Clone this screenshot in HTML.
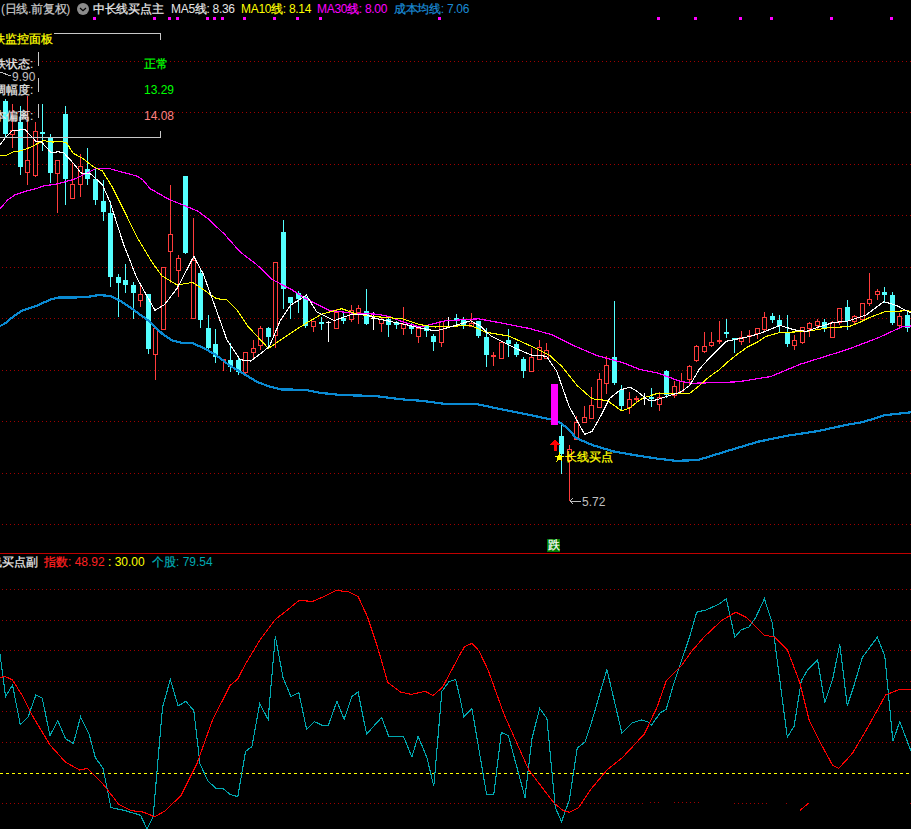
<!DOCTYPE html>
<html><head><meta charset="utf-8">
<style>
html,body{margin:0;padding:0;background:#000;width:911px;height:829px;overflow:hidden}
#c{position:relative;width:911px;height:829px}
svg{position:absolute;left:0;top:0}
.k{-webkit-text-stroke:0.25px currentColor}
.t{position:absolute;font-family:"Liberation Sans",sans-serif;font-size:12px;line-height:14px;white-space:nowrap;color:#fff}
</style></head><body><div id="c">
<svg width="911" height="829" viewBox="0 0 911 829" shape-rendering="crispEdges">
<rect width="911" height="829" fill="#000"/>
<line x1="0" y1="61.5" x2="911" y2="61.5" stroke="#a00000" stroke-dasharray="1 3" stroke-dashoffset="-2"/>
<line x1="0" y1="112.5" x2="911" y2="112.5" stroke="#a00000" stroke-dasharray="1 3" stroke-dashoffset="-2"/>
<line x1="0" y1="164.5" x2="911" y2="164.5" stroke="#a00000" stroke-dasharray="1 3" stroke-dashoffset="-2"/>
<line x1="0" y1="215.5" x2="911" y2="215.5" stroke="#a00000" stroke-dasharray="1 3" stroke-dashoffset="-2"/>
<line x1="0" y1="267.5" x2="911" y2="267.5" stroke="#a00000" stroke-dasharray="1 3" stroke-dashoffset="-2"/>
<line x1="0" y1="318.5" x2="911" y2="318.5" stroke="#a00000" stroke-dasharray="1 3" stroke-dashoffset="-2"/>
<line x1="0" y1="370.5" x2="911" y2="370.5" stroke="#a00000" stroke-dasharray="1 3" stroke-dashoffset="-2"/>
<line x1="0" y1="421.5" x2="911" y2="421.5" stroke="#a00000" stroke-dasharray="1 3" stroke-dashoffset="-2"/>
<line x1="0" y1="473.5" x2="911" y2="473.5" stroke="#a00000" stroke-dasharray="1 3" stroke-dashoffset="-2"/>
<line x1="0" y1="524.5" x2="911" y2="524.5" stroke="#a00000" stroke-dasharray="1 3" stroke-dashoffset="-2"/>
<line x1="0" y1="589.5" x2="911" y2="589.5" stroke="#a00000" stroke-dasharray="1 3" stroke-dashoffset="-2"/>
<line x1="0" y1="620.5" x2="911" y2="620.5" stroke="#a00000" stroke-dasharray="1 3" stroke-dashoffset="-2"/>
<line x1="0" y1="650.5" x2="911" y2="650.5" stroke="#a00000" stroke-dasharray="1 3" stroke-dashoffset="-2"/>
<line x1="0" y1="681.5" x2="911" y2="681.5" stroke="#a00000" stroke-dasharray="1 3" stroke-dashoffset="-2"/>
<line x1="0" y1="711.5" x2="911" y2="711.5" stroke="#a00000" stroke-dasharray="1 3" stroke-dashoffset="-2"/>
<line x1="0" y1="742.5" x2="911" y2="742.5" stroke="#a00000" stroke-dasharray="1 3" stroke-dashoffset="-2"/>
<line x1="0" y1="803.5" x2="644" y2="803.5" stroke="#a00000" stroke-dasharray="1 3" stroke-dashoffset="-2"/>
<line x1="647" y1="802.5" x2="661" y2="802.5" stroke="#a00000" stroke-dasharray="1 3" stroke-dashoffset="-3"/>
<line x1="671" y1="802.5" x2="699" y2="802.5" stroke="#a00000" stroke-dasharray="1 3" stroke-dashoffset="-3"/>
<line x1="732" y1="803.5" x2="770" y2="803.5" stroke="#a00000" stroke-dasharray="1 3" stroke-dashoffset="-2"/>
<line x1="786" y1="803.5" x2="787" y2="803.5" stroke="#a00000" stroke-dasharray="1 3" stroke-dashoffset="0"/>
<line x1="909" y1="803.5" x2="911" y2="803.5" stroke="#a00000" stroke-dasharray="1 3" stroke-dashoffset="-1"/>
<line x1="0" y1="773.5" x2="911" y2="773.5" stroke="#ffff00" stroke-dasharray="3 3"/>
<line x1="0" y1="553.5" x2="911" y2="553.5" stroke="#c00000"/>
<line x1="5.5" y1="99" x2="5.5" y2="137" stroke="#54ffff"/>
<rect x="3" y="101" width="5" height="33" fill="#54ffff"/>
<line x1="12.5" y1="104" x2="12.5" y2="148" stroke="#ff3c3c"/>
<rect x="10.5" y="130.5" width="4" height="4" fill="#000" stroke="#ff3c3c"/>
<line x1="20.5" y1="106" x2="20.5" y2="175" stroke="#54ffff"/>
<rect x="18" y="122" width="5" height="45" fill="#54ffff"/>
<line x1="27.5" y1="96" x2="27.5" y2="185" stroke="#ff3c3c"/>
<rect x="25.5" y="160.5" width="4" height="12" fill="#000" stroke="#ff3c3c"/>
<line x1="35.5" y1="122" x2="35.5" y2="177" stroke="#ff3c3c"/>
<rect x="33.5" y="131.5" width="4" height="44" fill="#000" stroke="#ff3c3c"/>
<line x1="42.5" y1="104" x2="42.5" y2="151" stroke="#54ffff"/>
<rect x="40" y="132" width="5" height="2" fill="#54ffff"/>
<line x1="50.5" y1="134" x2="50.5" y2="183" stroke="#54ffff"/>
<rect x="48" y="137" width="5" height="36" fill="#54ffff"/>
<line x1="57.5" y1="160" x2="57.5" y2="213" stroke="#ff3c3c"/>
<rect x="55.5" y="160.5" width="4" height="13" fill="#000" stroke="#ff3c3c"/>
<line x1="65.5" y1="106" x2="65.5" y2="205" stroke="#54ffff"/>
<rect x="63" y="114" width="5" height="65" fill="#54ffff"/>
<line x1="72.5" y1="163" x2="72.5" y2="199" stroke="#ff3c3c"/>
<rect x="70.5" y="184.5" width="4" height="14" fill="#000" stroke="#ff3c3c"/>
<line x1="80.5" y1="154" x2="80.5" y2="197" stroke="#ff3c3c"/>
<rect x="78.5" y="166.5" width="4" height="18" fill="#000" stroke="#ff3c3c"/>
<line x1="87.5" y1="148" x2="87.5" y2="185" stroke="#54ffff"/>
<rect x="85" y="169" width="5" height="10" fill="#54ffff"/>
<line x1="95.5" y1="169" x2="95.5" y2="205" stroke="#54ffff"/>
<rect x="93" y="179" width="5" height="21" fill="#54ffff"/>
<line x1="103.5" y1="180" x2="103.5" y2="221" stroke="#54ffff"/>
<rect x="101" y="201" width="5" height="11" fill="#54ffff"/>
<line x1="110.5" y1="201" x2="110.5" y2="287" stroke="#54ffff"/>
<rect x="108" y="213" width="5" height="64" fill="#54ffff"/>
<line x1="118.5" y1="274" x2="118.5" y2="317" stroke="#54ffff"/>
<rect x="116" y="277" width="5" height="6" fill="#54ffff"/>
<line x1="125.5" y1="264" x2="125.5" y2="293" stroke="#54ffff"/>
<rect x="123" y="280" width="5" height="5" fill="#54ffff"/>
<line x1="133.5" y1="282" x2="133.5" y2="319" stroke="#54ffff"/>
<rect x="131" y="285" width="5" height="8" fill="#54ffff"/>
<line x1="140.5" y1="283" x2="140.5" y2="307" stroke="#ff3c3c"/>
<rect x="138.5" y="294.5" width="4" height="6" fill="#000" stroke="#ff3c3c"/>
<line x1="148.5" y1="294" x2="148.5" y2="354" stroke="#54ffff"/>
<rect x="146" y="294" width="5" height="55" fill="#54ffff"/>
<line x1="155.5" y1="328" x2="155.5" y2="380" stroke="#ff3c3c"/>
<rect x="153.5" y="328.5" width="4" height="26" fill="#000" stroke="#ff3c3c"/>
<line x1="163.5" y1="267" x2="163.5" y2="330" stroke="#ff3c3c"/>
<rect x="161.5" y="267.5" width="4" height="62" fill="#000" stroke="#ff3c3c"/>
<line x1="170.5" y1="185" x2="170.5" y2="283" stroke="#ff3c3c"/>
<rect x="168.5" y="234.5" width="4" height="17" fill="#000" stroke="#ff3c3c"/>
<line x1="178.5" y1="255" x2="178.5" y2="297" stroke="#ff3c3c"/>
<rect x="176.5" y="258.5" width="4" height="12" fill="#000" stroke="#ff3c3c"/>
<line x1="185.5" y1="176" x2="185.5" y2="254" stroke="#54ffff"/>
<rect x="183" y="176" width="5" height="77" fill="#54ffff"/>
<line x1="193.5" y1="218" x2="193.5" y2="319" stroke="#ff3c3c"/>
<rect x="191.5" y="260.5" width="4" height="58" fill="#000" stroke="#ff3c3c"/>
<line x1="200.5" y1="270" x2="200.5" y2="328" stroke="#54ffff"/>
<rect x="198" y="273" width="5" height="47" fill="#54ffff"/>
<line x1="208.5" y1="315" x2="208.5" y2="350" stroke="#54ffff"/>
<rect x="206" y="328" width="5" height="20" fill="#54ffff"/>
<line x1="215.5" y1="329" x2="215.5" y2="363" stroke="#54ffff"/>
<rect x="213" y="344" width="5" height="13" fill="#54ffff"/>
<line x1="223.5" y1="359" x2="223.5" y2="371" stroke="#ff3c3c"/>
<rect x="221" y="359" width="5" height="2" fill="#ff3c3c"/>
<line x1="230.5" y1="343" x2="230.5" y2="372" stroke="#54ffff"/>
<rect x="228" y="360" width="5" height="7" fill="#54ffff"/>
<line x1="238.5" y1="357" x2="238.5" y2="375" stroke="#54ffff"/>
<rect x="236" y="360" width="5" height="12" fill="#54ffff"/>
<line x1="245.5" y1="352" x2="245.5" y2="376" stroke="#ff3c3c"/>
<rect x="243.5" y="352.5" width="4" height="20" fill="#000" stroke="#ff3c3c"/>
<line x1="253.5" y1="340" x2="253.5" y2="358" stroke="#ff3c3c"/>
<rect x="251.5" y="348.5" width="4" height="4" fill="#000" stroke="#ff3c3c"/>
<line x1="260.5" y1="326" x2="260.5" y2="350" stroke="#ff3c3c"/>
<rect x="258.5" y="328.5" width="4" height="17" fill="#000" stroke="#ff3c3c"/>
<line x1="268.5" y1="327" x2="268.5" y2="346" stroke="#54ffff"/>
<rect x="266" y="328" width="5" height="9" fill="#54ffff"/>
<line x1="275.5" y1="262" x2="275.5" y2="348" stroke="#ff3c3c"/>
<rect x="273.5" y="262.5" width="4" height="73" fill="#000" stroke="#ff3c3c"/>
<line x1="283.5" y1="220" x2="283.5" y2="309" stroke="#54ffff"/>
<rect x="281" y="232" width="5" height="57" fill="#54ffff"/>
<line x1="290.5" y1="297" x2="290.5" y2="319" stroke="#54ffff"/>
<rect x="288" y="297" width="5" height="6" fill="#54ffff"/>
<line x1="298.5" y1="291" x2="298.5" y2="313" stroke="#54ffff"/>
<rect x="296" y="293" width="5" height="6" fill="#54ffff"/>
<line x1="305.5" y1="295" x2="305.5" y2="328" stroke="#54ffff"/>
<rect x="303" y="297" width="5" height="29" fill="#54ffff"/>
<line x1="313.5" y1="321" x2="313.5" y2="332" stroke="#ff3c3c"/>
<rect x="311.5" y="321.5" width="4" height="5" fill="#000" stroke="#ff3c3c"/>
<line x1="321.5" y1="317" x2="321.5" y2="330" stroke="#54ffff"/>
<rect x="319" y="322" width="5" height="2" fill="#54ffff"/>
<line x1="328.5" y1="321" x2="328.5" y2="342" stroke="#ffffff"/>
<rect x="326" y="322" width="5" height="1" fill="#ffffff"/>
<line x1="336.5" y1="309" x2="336.5" y2="329" stroke="#ff3c3c"/>
<rect x="334.5" y="312.5" width="4" height="16" fill="#000" stroke="#ff3c3c"/>
<line x1="343.5" y1="312" x2="343.5" y2="324" stroke="#54ffff"/>
<rect x="341" y="318" width="5" height="3" fill="#54ffff"/>
<line x1="351.5" y1="305" x2="351.5" y2="322" stroke="#ff3c3c"/>
<rect x="349.5" y="310.5" width="4" height="9" fill="#000" stroke="#ff3c3c"/>
<line x1="358.5" y1="305" x2="358.5" y2="324" stroke="#ff3c3c"/>
<rect x="356.5" y="308.5" width="4" height="4" fill="#000" stroke="#ff3c3c"/>
<line x1="366.5" y1="289" x2="366.5" y2="325" stroke="#54ffff"/>
<rect x="364" y="311" width="5" height="13" fill="#54ffff"/>
<line x1="373.5" y1="312" x2="373.5" y2="330" stroke="#ffffff"/>
<rect x="371" y="318" width="5" height="1" fill="#ffffff"/>
<line x1="381.5" y1="317" x2="381.5" y2="332" stroke="#ff3c3c"/>
<rect x="379.5" y="319.5" width="4" height="4" fill="#000" stroke="#ff3c3c"/>
<line x1="388.5" y1="318" x2="388.5" y2="337" stroke="#54ffff"/>
<rect x="386" y="319" width="5" height="6" fill="#54ffff"/>
<line x1="396.5" y1="321" x2="396.5" y2="329" stroke="#54ffff"/>
<rect x="394" y="322" width="5" height="3" fill="#54ffff"/>
<line x1="403.5" y1="307" x2="403.5" y2="335" stroke="#ff3c3c"/>
<rect x="401.5" y="324.5" width="4" height="4" fill="#000" stroke="#ff3c3c"/>
<line x1="411.5" y1="323" x2="411.5" y2="334" stroke="#54ffff"/>
<rect x="409" y="326" width="5" height="3" fill="#54ffff"/>
<line x1="418.5" y1="328" x2="418.5" y2="343" stroke="#ff3c3c"/>
<rect x="416.5" y="328.5" width="4" height="8" fill="#000" stroke="#ff3c3c"/>
<line x1="426.5" y1="325" x2="426.5" y2="337" stroke="#54ffff"/>
<rect x="424" y="326" width="5" height="5" fill="#54ffff"/>
<line x1="433.5" y1="334" x2="433.5" y2="351" stroke="#54ffff"/>
<rect x="431" y="336" width="5" height="6" fill="#54ffff"/>
<line x1="441.5" y1="321" x2="441.5" y2="347" stroke="#ff3c3c"/>
<rect x="439.5" y="321.5" width="4" height="21" fill="#000" stroke="#ff3c3c"/>
<line x1="448.5" y1="317" x2="448.5" y2="326" stroke="#ffffff"/>
<rect x="446" y="320" width="5" height="1" fill="#ffffff"/>
<line x1="456.5" y1="314" x2="456.5" y2="324" stroke="#54ffff"/>
<rect x="454" y="318" width="5" height="3" fill="#54ffff"/>
<line x1="463.5" y1="317" x2="463.5" y2="329" stroke="#54ffff"/>
<rect x="461" y="319" width="5" height="6" fill="#54ffff"/>
<line x1="471.5" y1="313" x2="471.5" y2="327" stroke="#ff3c3c"/>
<rect x="469.5" y="323.5" width="4" height="3" fill="#000" stroke="#ff3c3c"/>
<line x1="478.5" y1="321" x2="478.5" y2="338" stroke="#54ffff"/>
<rect x="476" y="321" width="5" height="15" fill="#54ffff"/>
<line x1="486.5" y1="328" x2="486.5" y2="367" stroke="#54ffff"/>
<rect x="484" y="337" width="5" height="18" fill="#54ffff"/>
<line x1="493.5" y1="352" x2="493.5" y2="366" stroke="#ff3c3c"/>
<rect x="491" y="355" width="5" height="2" fill="#ff3c3c"/>
<line x1="501.5" y1="342" x2="501.5" y2="359" stroke="#ff3c3c"/>
<rect x="499.5" y="342.5" width="4" height="16" fill="#000" stroke="#ff3c3c"/>
<line x1="508.5" y1="329" x2="508.5" y2="357" stroke="#54ffff"/>
<rect x="506" y="340" width="5" height="4" fill="#54ffff"/>
<line x1="516.5" y1="342" x2="516.5" y2="357" stroke="#54ffff"/>
<rect x="514" y="344" width="5" height="11" fill="#54ffff"/>
<line x1="523.5" y1="357" x2="523.5" y2="378" stroke="#54ffff"/>
<rect x="521" y="359" width="5" height="12" fill="#54ffff"/>
<line x1="531.5" y1="348" x2="531.5" y2="372" stroke="#ff3c3c"/>
<rect x="529.5" y="357.5" width="4" height="14" fill="#000" stroke="#ff3c3c"/>
<line x1="539.5" y1="340" x2="539.5" y2="360" stroke="#ff3c3c"/>
<rect x="537.5" y="347.5" width="4" height="12" fill="#000" stroke="#ff3c3c"/>
<line x1="546.5" y1="343" x2="546.5" y2="359" stroke="#ff3c3c"/>
<rect x="544.5" y="350.5" width="4" height="8" fill="#000" stroke="#ff3c3c"/>
<line x1="561.5" y1="423" x2="561.5" y2="474" stroke="#54ffff"/>
<rect x="559" y="436" width="5" height="18" fill="#54ffff"/>
<line x1="569.5" y1="445" x2="569.5" y2="501" stroke="#ff3c3c"/>
<rect x="567.5" y="449.5" width="4" height="11" fill="#000" stroke="#ff3c3c"/>
<line x1="576.5" y1="416" x2="576.5" y2="440" stroke="#ff3c3c"/>
<rect x="574.5" y="422.5" width="4" height="17" fill="#000" stroke="#ff3c3c"/>
<line x1="584.5" y1="406" x2="584.5" y2="423" stroke="#ff3c3c"/>
<rect x="582.5" y="417.5" width="4" height="5" fill="#000" stroke="#ff3c3c"/>
<line x1="591.5" y1="387" x2="591.5" y2="419" stroke="#ff3c3c"/>
<rect x="589.5" y="405.5" width="4" height="13" fill="#000" stroke="#ff3c3c"/>
<line x1="599.5" y1="373" x2="599.5" y2="408" stroke="#ff3c3c"/>
<rect x="597.5" y="379.5" width="4" height="28" fill="#000" stroke="#ff3c3c"/>
<line x1="606.5" y1="356" x2="606.5" y2="394" stroke="#ff3c3c"/>
<rect x="604.5" y="365.5" width="4" height="18" fill="#000" stroke="#ff3c3c"/>
<line x1="614.5" y1="301" x2="614.5" y2="385" stroke="#54ffff"/>
<rect x="612" y="357" width="5" height="26" fill="#54ffff"/>
<line x1="621.5" y1="385" x2="621.5" y2="410" stroke="#54ffff"/>
<rect x="619" y="390" width="5" height="16" fill="#54ffff"/>
<line x1="629.5" y1="392" x2="629.5" y2="414" stroke="#ff3c3c"/>
<rect x="627.5" y="399.5" width="4" height="8" fill="#000" stroke="#ff3c3c"/>
<line x1="636.5" y1="396" x2="636.5" y2="403" stroke="#ff3c3c"/>
<rect x="634" y="398" width="5" height="2" fill="#ff3c3c"/>
<line x1="644.5" y1="393" x2="644.5" y2="405" stroke="#ffffff"/>
<rect x="642" y="398" width="5" height="1" fill="#ffffff"/>
<line x1="651.5" y1="388" x2="651.5" y2="407" stroke="#54ffff"/>
<rect x="649" y="397" width="5" height="2" fill="#54ffff"/>
<line x1="659.5" y1="392" x2="659.5" y2="411" stroke="#ff3c3c"/>
<rect x="657.5" y="397.5" width="4" height="7" fill="#000" stroke="#ff3c3c"/>
<line x1="666.5" y1="370" x2="666.5" y2="398" stroke="#54ffff"/>
<rect x="664" y="371" width="5" height="24" fill="#54ffff"/>
<line x1="674.5" y1="381" x2="674.5" y2="398" stroke="#ff3c3c"/>
<rect x="672.5" y="386.5" width="4" height="9" fill="#000" stroke="#ff3c3c"/>
<line x1="681.5" y1="373" x2="681.5" y2="392" stroke="#ff3c3c"/>
<rect x="679.5" y="381.5" width="4" height="10" fill="#000" stroke="#ff3c3c"/>
<line x1="689.5" y1="365" x2="689.5" y2="385" stroke="#ff3c3c"/>
<rect x="687.5" y="366.5" width="4" height="13" fill="#000" stroke="#ff3c3c"/>
<line x1="696.5" y1="345" x2="696.5" y2="362" stroke="#ff3c3c"/>
<rect x="694.5" y="346.5" width="4" height="14" fill="#000" stroke="#ff3c3c"/>
<line x1="704.5" y1="332" x2="704.5" y2="353" stroke="#ff3c3c"/>
<rect x="702.5" y="346.5" width="4" height="5" fill="#000" stroke="#ff3c3c"/>
<line x1="711.5" y1="332" x2="711.5" y2="347" stroke="#ff3c3c"/>
<rect x="709.5" y="342.5" width="4" height="3" fill="#000" stroke="#ff3c3c"/>
<line x1="719.5" y1="321" x2="719.5" y2="344" stroke="#ff3c3c"/>
<rect x="717" y="340" width="5" height="2" fill="#ff3c3c"/>
<line x1="726.5" y1="319" x2="726.5" y2="338" stroke="#54ffff"/>
<rect x="724" y="332" width="5" height="2" fill="#54ffff"/>
<line x1="734.5" y1="338" x2="734.5" y2="353" stroke="#54ffff"/>
<rect x="732" y="338" width="5" height="2" fill="#54ffff"/>
<line x1="741.5" y1="331" x2="741.5" y2="345" stroke="#ff3c3c"/>
<rect x="739.5" y="337.5" width="4" height="4" fill="#000" stroke="#ff3c3c"/>
<line x1="749.5" y1="330" x2="749.5" y2="343" stroke="#ff3c3c"/>
<rect x="747" y="335" width="5" height="2" fill="#ff3c3c"/>
<line x1="757.5" y1="328" x2="757.5" y2="339" stroke="#ff3c3c"/>
<rect x="755.5" y="328.5" width="4" height="5" fill="#000" stroke="#ff3c3c"/>
<line x1="764.5" y1="312" x2="764.5" y2="332" stroke="#ff3c3c"/>
<rect x="762.5" y="317.5" width="4" height="12" fill="#000" stroke="#ff3c3c"/>
<line x1="772.5" y1="313" x2="772.5" y2="323" stroke="#54ffff"/>
<rect x="770" y="316" width="5" height="4" fill="#54ffff"/>
<line x1="779.5" y1="315" x2="779.5" y2="332" stroke="#54ffff"/>
<rect x="777" y="320" width="5" height="6" fill="#54ffff"/>
<line x1="787.5" y1="315" x2="787.5" y2="347" stroke="#54ffff"/>
<rect x="785" y="332" width="5" height="12" fill="#54ffff"/>
<line x1="794.5" y1="335" x2="794.5" y2="350" stroke="#ff3c3c"/>
<rect x="792.5" y="340.5" width="4" height="5" fill="#000" stroke="#ff3c3c"/>
<line x1="802.5" y1="327" x2="802.5" y2="344" stroke="#ff3c3c"/>
<rect x="800.5" y="327.5" width="4" height="15" fill="#000" stroke="#ff3c3c"/>
<line x1="809.5" y1="322" x2="809.5" y2="337" stroke="#ff3c3c"/>
<rect x="807.5" y="323.5" width="4" height="5" fill="#000" stroke="#ff3c3c"/>
<line x1="817.5" y1="319" x2="817.5" y2="329" stroke="#ff3c3c"/>
<rect x="815.5" y="321.5" width="4" height="4" fill="#000" stroke="#ff3c3c"/>
<line x1="824.5" y1="319" x2="824.5" y2="332" stroke="#54ffff"/>
<rect x="822" y="322" width="5" height="6" fill="#54ffff"/>
<line x1="832.5" y1="321" x2="832.5" y2="338" stroke="#ff3c3c"/>
<rect x="830.5" y="322.5" width="4" height="15" fill="#000" stroke="#ff3c3c"/>
<line x1="839.5" y1="308" x2="839.5" y2="325" stroke="#ff3c3c"/>
<rect x="837.5" y="308.5" width="4" height="14" fill="#000" stroke="#ff3c3c"/>
<line x1="847.5" y1="300" x2="847.5" y2="330" stroke="#54ffff"/>
<rect x="845" y="307" width="5" height="14" fill="#54ffff"/>
<line x1="854.5" y1="315" x2="854.5" y2="325" stroke="#ff3c3c"/>
<rect x="852.5" y="316.5" width="4" height="5" fill="#000" stroke="#ff3c3c"/>
<line x1="862.5" y1="303" x2="862.5" y2="321" stroke="#ff3c3c"/>
<rect x="860.5" y="303.5" width="4" height="16" fill="#000" stroke="#ff3c3c"/>
<line x1="869.5" y1="273" x2="869.5" y2="306" stroke="#ff3c3c"/>
<rect x="867.5" y="299.5" width="4" height="4" fill="#000" stroke="#ff3c3c"/>
<line x1="877.5" y1="289" x2="877.5" y2="300" stroke="#ff3c3c"/>
<rect x="875.5" y="291.5" width="4" height="3" fill="#000" stroke="#ff3c3c"/>
<line x1="884.5" y1="287" x2="884.5" y2="303" stroke="#54ffff"/>
<rect x="882" y="292" width="5" height="3" fill="#54ffff"/>
<line x1="892.5" y1="292" x2="892.5" y2="325" stroke="#54ffff"/>
<rect x="890" y="295" width="5" height="28" fill="#54ffff"/>
<line x1="899.5" y1="313" x2="899.5" y2="327" stroke="#ff3c3c"/>
<rect x="897.5" y="316.5" width="4" height="9" fill="#000" stroke="#ff3c3c"/>
<line x1="907.5" y1="311" x2="907.5" y2="332" stroke="#54ffff"/>
<rect x="905" y="315" width="5" height="13" fill="#54ffff"/>
<polyline points="0.0,326.0 5.0,323.5 12.7,317.0 21.5,310.8 30.4,307.8 38.0,305.2 50.7,299.4 58.3,297.6 78.5,297.4 91.2,296.4 98.8,295.0 110.2,296.0 119.0,300.0 134.2,310.3 149.4,321.4 162.1,333.6 172.2,340.4 182.4,343.0 192.5,343.2 202.6,347.5 215.3,354.4 229.2,365.2 232.0,366.9 244.1,374.1 256.2,381.4 268.3,386.2 280.4,389.4 304.5,389.8 321.4,393.0 338.3,394.7 352.8,395.4 374.6,395.9 389.0,397.8 403.5,399.5 420.4,400.7 445.3,403.9 478.3,404.4 496.0,408.2 521.3,413.2 551.7,419.6 559.3,422.0 568.0,428.7 576.1,438.0 592.5,445.1 613.0,451.3 633.6,455.0 657.8,458.7 675.7,460.8 696.5,460.2 705.4,457.8 729.2,450.4 759.0,441.5 788.7,435.5 818.5,431.0 848.2,424.5 863.1,422.1 883.9,415.3 911.0,412.3" fill="none" stroke="#0a8ad2" stroke-width="2.2" stroke-linejoin="round"/>
<rect x="551" y="384" width="7" height="41" fill="#ff00ff"/>
<polyline points="0.0,208.5 7.7,200.0 15.4,194.6 25.1,191.4 36.7,188.5 44.4,185.6 54.0,184.6 65.6,181.7 75.3,178.8 86.1,173.5 96.5,168.2 108.1,168.2 121.6,172.0 136.8,176.0 142.9,179.8 150.0,188.6 168.6,199.2 181.8,204.5 197.7,211.1 208.4,219.1 224.3,234.0 240.2,252.0 256.1,264.0 272.0,279.5 290.6,289.0 306.4,299.0 329.2,310.4 352.0,313.0 377.3,314.2 390.0,316.8 402.6,321.8 420.0,327.0 445.3,320.8 478.3,318.8 496.0,322.0 529.0,328.4 551.7,334.7 572.0,344.9 597.3,355.7 622.6,362.6 640.0,369.5 657.8,373.0 680.0,381.3 692.5,383.2 714.7,382.7 737.9,381.8 753.4,379.4 770.9,376.5 800.6,364.1 824.4,356.7 848.2,349.2 878.0,337.9 901.8,326.9 911.0,326.0" fill="none" stroke="#ff00ff" stroke-width="1.2" />
<polyline points="0.0,155.7 5.8,155.6 13.5,151.8 21.2,150.8 30.9,147.0 43.4,140.6 52.1,142.0 61.8,141.7 66.6,143.0 73.4,153.5 83.0,158.5 92.7,166.3 102.3,171.0 112.0,186.5 123.6,209.7 136.8,236.8 152.0,262.2 162.1,276.0 177.3,285.0 192.5,282.4 203.0,289.4 216.3,298.6 226.9,300.0 237.5,310.6 248.1,326.5 268.4,348.4 288.7,334.5 306.4,323.0 321.6,314.2 341.8,308.7 357.0,314.2 377.3,316.8 402.6,318.8 420.0,324.6 435.2,327.0 470.7,325.4 485.9,332.2 508.7,336.0 534.0,347.4 549.2,355.0 561.8,366.4 577.0,385.4 592.2,398.8 607.4,400.6 621.4,410.7 629.0,408.5 632.9,405.5 638.2,401.1 643.4,397.6 649.6,396.2 657.5,393.2 663.8,393.9 689.7,393.4 699.3,385.6 709.0,377.0 718.6,370.2 728.3,361.5 737.9,353.8 747.6,347.0 757.2,342.2 765.8,336.5 779.7,332.5 805.5,331.6 829.3,327.6 849.2,326.6 859.1,322.6 869.0,317.7 884.9,311.7 908.7,310.7 911.0,312.0" fill="none" stroke="#ffff00" stroke-width="1.1" />
<polyline points="0.0,145.0 5.0,138.0 12.5,130.5 25.0,129.6 35.7,141.0 41.5,142.0 51.2,152.7 57.9,151.8 63.7,152.7 73.4,163.4 81.0,173.0 90.7,174.0 102.3,184.6 110.0,202.0 123.6,244.4 136.8,277.9 155.0,310.3 164.6,304.5 177.3,288.0 193.8,256.3 203.0,273.5 213.7,302.6 226.9,339.8 240.2,359.7 250.8,361.0 261.4,353.0 269.4,346.4 280.0,321.2 290.6,305.3 306.4,295.2 316.5,311.7 334.2,320.6 352.0,314.2 364.6,314.2 377.3,318.8 402.6,323.9 420.0,327.9 435.2,331.0 445.3,328.4 470.7,320.8 480.8,326.4 490.9,336.0 516.3,348.7 531.5,355.0 546.6,356.3 556.8,371.4 569.4,407.0 584.6,434.3 592.0,431.5 600.8,415.8 609.5,398.6 620.3,389.9 629.8,387.2 636.0,390.5 643.9,396.7 649.6,400.6 657.0,399.8 669.7,395.4 680.0,392.4 689.7,385.6 699.3,369.2 709.0,358.6 718.6,349.0 726.3,341.2 734.0,339.8 747.6,336.9 760.0,333.5 779.8,325.4 794.7,329.9 806.6,331.4 818.5,327.0 833.4,322.5 848.2,321.0 866.1,315.0 883.9,301.6 895.8,305.2 911.0,313.0" fill="none" stroke="#ffffff" stroke-width="1.1" />
<polyline points="0.0,654.4 5.6,696.6 12.5,685.0 20.3,724.7 28.1,716.9 35.9,695.0 42.2,698.1 50.0,735.6 57.8,720.6 65.6,738.8 73.4,743.4 80.6,716.9 89.0,734.0 95.3,757.5 103.1,768.4 110.9,807.5 125.0,810.6 140.6,815.3 146.9,829.0 153.1,816.9 162.5,707.5 170.3,679.4 178.1,705.9 185.9,701.3 193.8,710.6 200.0,763.8 207.8,780.9 215.6,788.1 222.5,788.1 230.0,794.4 237.8,796.6 245.6,751.3 251.9,746.6 259.7,703.8 268.1,719.4 275.3,636.3 283.1,677.8 290.9,696.6 298.8,692.5 306.6,729.4 314.4,721.6 322.2,725.3 328.4,725.3 336.9,701.3 344.1,719.4 351.9,696.6 358.1,691.9 366.6,734.0 381.6,717.5 388.8,736.3 403.4,736.3 411.9,756.9 418.1,736.3 426.9,757.5 433.8,786.3 441.9,691.3 448.8,681.9 455.6,679.4 460.0,698.1 463.8,716.9 471.9,708.4 486.6,794.4 493.8,794.4 501.3,732.5 508.4,735.6 525.0,797.5 531.9,738.8 539.7,708.4 546.9,718.4 555.3,807.5 561.6,821.6 569.4,799.7 577.2,748.1 585.0,741.9 591.3,723.1 606.9,669.4 621.9,733.1 631.9,723.1 641.3,720.0 647.5,721.6 651.3,725.3 660.0,713.1 666.3,709.1 674.1,682.5 690.0,635.6 696.6,612.2 706.0,610.0 718.5,604.4 726.3,598.8 734.8,637.2 741.0,630.0 749.1,626.9 756.0,616.9 764.4,598.8 772.3,623.1 787.3,737.2 794.1,726.3 801.3,680.9 807.6,670.0 817.6,660.0 824.8,702.8 832.6,679.4 839.8,644.4 847.3,705.9 854.4,684.1 862.3,657.5 877.3,637.2 884.8,655.9 892.9,741.3 899.8,721.6 911.0,751.3" fill="none" stroke="#00a8b0" stroke-width="1.1" />
<polyline points="0.0,677.8 4.7,676.3 12.5,680.0 21.9,695.0 31.3,713.8 50.0,745.0 65.6,762.2 79.7,770.0 87.5,768.4 103.0,784.0 118.8,804.4 131.3,810.6 143.8,812.2 154.7,816.9 165.6,810.6 181.3,795.0 196.9,763.8 212.5,720.0 230.0,685.6 237.8,678.8 245.6,663.8 259.7,640.3 275.3,619.4 284.7,612.2 298.8,600.6 312.8,601.3 323.8,596.6 336.3,590.3 348.8,591.9 358.1,596.6 367.5,616.9 376.9,645.0 387.8,682.5 400.3,691.9 411.3,694.4 425.3,691.3 433.1,695.6 442.5,687.2 460.0,654.4 464.7,646.6 471.9,643.4 478.8,650.6 488.1,670.0 503.8,713.8 528.8,770.0 553.8,802.8 563.1,810.6 569.4,812.2 578.8,807.5 591.3,788.8 606.9,770.0 622.5,757.5 644.4,734.0 656.9,707.5 666.3,680.9 681.9,665.3 690.4,652.8 704.4,636.6 721.6,620.6 735.7,612.2 746.6,617.5 763.8,635.0 774.8,637.2 787.3,649.7 799.8,682.5 809.1,720.0 821.6,745.0 832.6,765.3 838.8,768.4 852.8,752.8 868.4,726.3 885.6,695.0 899.8,689.4 911.0,689.4" fill="none" stroke="#ff0000" stroke-width="1.1" />
<line x1="799.8" y1="810.6" x2="809.1" y2="802.8" stroke="#ff0000"/>
<rect x="93" y="17" width="3" height="3" fill="#ff00ff"/>
<rect x="153" y="17" width="3" height="3" fill="#ff00ff"/>
<rect x="168" y="17" width="3" height="3" fill="#ff00ff"/>
<rect x="176" y="17" width="3" height="3" fill="#ff00ff"/>
<rect x="206" y="17" width="3" height="3" fill="#ff00ff"/>
<rect x="213" y="17" width="3" height="3" fill="#ff00ff"/>
<rect x="221" y="17" width="3" height="3" fill="#ff00ff"/>
<rect x="243" y="17" width="3" height="3" fill="#ff00ff"/>
<rect x="273" y="17" width="3" height="3" fill="#ff00ff"/>
<rect x="296" y="17" width="3" height="3" fill="#ff00ff"/>
<rect x="319" y="17" width="3" height="3" fill="#ff00ff"/>
<rect x="438" y="17" width="3" height="3" fill="#ff00ff"/>
<rect x="657" y="17" width="3" height="3" fill="#ff00ff"/>
<rect x="694" y="17" width="3" height="3" fill="#ff00ff"/>
<rect x="739" y="17" width="3" height="3" fill="#ff00ff"/>
<rect x="770" y="17" width="3" height="3" fill="#ff00ff"/>
<rect x="830" y="17" width="3" height="3" fill="#ff00ff"/>
<rect x="890" y="17" width="3" height="3" fill="#ff00ff"/>
<polyline points="0,33.5 160.5,33.5 160.5,40" fill="none" stroke="#c8c8c8"/>
<polyline points="0,137.5 160.5,137.5 160.5,131" fill="none" stroke="#c8c8c8"/>
<line x1="38.5" y1="52" x2="38.5" y2="66" stroke="#c8c8c8"/>
<line x1="38.5" y1="78" x2="38.5" y2="92" stroke="#c8c8c8"/>
<line x1="38.5" y1="104" x2="38.5" y2="118" stroke="#c8c8c8"/>
<polygon points="555,439 550,445 553.5,445 553.5,451 556.5,451 556.5,445 560,445" fill="#ff0000"/>
<polygon points="559.50,452.30 560.79,455.72 564.45,455.89 561.59,458.18 562.56,461.71 559.50,459.70 556.44,461.71 557.41,458.18 554.55,455.89 558.21,455.72" fill="#ffff00"/>
<polyline points="573,498 570,501 573,504" fill="none" stroke="#c0c0c0"/>
<line x1="570" y1="501.5" x2="581" y2="501.5" stroke="#c0c0c0"/>
<line x1="0" y1="72" x2="11" y2="76" stroke="#c0c0c0"/>
</svg>
<div class="t" style="left:1px;top:2px;letter-spacing:-0.3px;color:#c8c8c8">(<span class="k">日线</span>.<span class="k">前复权</span>)</div>
<div style="position:absolute;left:77px;top:3px;width:12px;height:12px;border-radius:50%;background:#8c8c8c"></div>
<svg style="position:absolute;left:77px;top:3px" width="12" height="12"><polyline points="3,5 6,7.8 9,5" fill="none" stroke="#000" stroke-width="1.2"/></svg>
<div class="t" style="left:93px;top:2px;letter-spacing:-0.3px;color:#e6e6e6"><span class="k">中长线买点主</span></div>
<div class="t" style="left:171px;top:2px;letter-spacing:-0.3px;color:#e6e6e6">MA5<span class="k">线</span>: 8.36</div>
<div class="t" style="left:241px;top:2px;letter-spacing:-0.3px;color:#ffff00">MA10<span class="k">线</span>: 8.14</div>
<div class="t" style="left:317px;top:2px;letter-spacing:-0.3px;color:#ff00ff">MA30<span class="k">线</span>: 8.00</div>
<div class="t" style="left:394px;top:2px;letter-spacing:-0.3px;color:#1a8ad4"><span class="k">成本均线</span>: 7.06</div>

<div class="t" style="left:-7px;top:32px;color:#ffff00;background:#000;padding-right:1px"><span class="k">铁监控面板</span></div>
<div class="t" style="left:-6px;top:57px;color:#e6e6e6"><span class="k">铁状态</span>:</div>
<div class="t" style="left:12px;top:70px;color:#c0c0c0">9.90</div>
<div class="t" style="left:-6px;top:83px;color:#e6e6e6"><span class="k">调幅度</span>:</div>
<div class="t" style="left:-6px;top:109px;color:#e6e6e6"><span class="k">本偏离</span>:</div>
<div class="t" style="left:144px;top:57px;color:#00ff00"><span class="k">正常</span></div>
<div class="t" style="left:144px;top:83px;color:#00ff00">13.29</div>
<div class="t" style="left:144px;top:109px;color:#ff8080">14.08</div>

<div class="t" style="left:565px;top:450px;color:#ffff00"><span class="k">长线买点</span></div>
<div class="t" style="left:582px;top:495px;color:#c0c0c0">5.72</div>
<div class="t" style="left:547px;top:539px;width:13px;height:13px;background:#007a00;color:#fff;text-align:center;line-height:13px"><span class="k">跌</span></div>

<div class="t" style="left:-22px;top:555px;color:#e6e6e6"><span class="k">长线买点副</span></div>
<div class="t" style="left:44px;top:555px;color:#ff2020"><span class="k">指数</span>: 48.92</div>
<div class="t" style="left:108px;top:555px;color:#ffff00">: 30.00</div>
<div class="t" style="left:152px;top:555px;color:#00a8b0"><span class="k">个股</span>: 79.54</div>
</div></body></html>
